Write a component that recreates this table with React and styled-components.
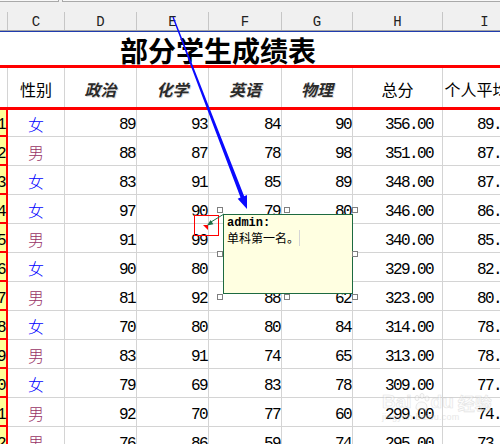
import React from 'react';
import styled, { createGlobalStyle } from 'styled-components';

const COLS = '8px 57px 72px 72px 73px 71px 90px 84px';
const GRID = '#d4d4d4';
const RED = '#ff0000';
const MONO = '"Liberation Mono", "DejaVu Sans Mono", monospace';
const CJK = '"Noto Sans CJK SC", "Noto Sans", sans-serif';

const GlobalStyle = createGlobalStyle`
  html, body { margin: 0; padding: 0; background: #fff; overflow: hidden; }
  body { font-family: ${MONO}; color: #000; }
`;

const Page = styled.div`
  position: relative;
  width: 500px;
  height: 444px;
  overflow: hidden;
  background: #fff;
`;

const Sheet = styled.div`
  width: 527px;
  display: flex;
  flex-direction: column;
`;

const TopBar = styled.div`
  height: 12px;
  background: #f0f0f0;
  display: flex;
  align-items: flex-start;
  gap: 3px;
`;

const BarBox = styled.div`
  height: 1px;
  background: #f8f8f8;
  border-bottom: 1px solid #a9a9a9;
  ${p => (p.$grow ? 'flex: 1; border-left: 1px solid #a9a9a9;' : 'width: 58px; border-right: 1px solid #a9a9a9;')}
`;

const ColHeaderRow = styled.div`
  display: grid;
  grid-template-columns: ${COLS};
  height: 18px;
  background: #f0f0f0;
  border-bottom: 1px solid #a3a3a3;
`;

const ColHead = styled.div`
  box-sizing: border-box;
  border-right: 1px solid #c6c6c6;
  display: flex;
  align-items: center;
  justify-content: center;
  padding-top: 1px;
  font-family: ${MONO};
  font-size: 14px;
  line-height: 1;
  color: #222;
`;

const BlueRule = styled.div`
  height: 1px;
  background: #1f3cae;
`;

const TitleRow = styled.div`
  height: 33px;
  border-bottom: 3px solid ${RED};
  display: flex;
  align-items: center;
  padding-left: 120px;
`;

const Title = styled.h1`
  margin: 0;
  font-family: ${CJK};
  font-weight: 700;
  font-size: 28px;
  line-height: 1;
  color: #000;
  padding-top: 2px;
`;

const HeaderRow = styled.div`
  display: grid;
  grid-template-columns: ${COLS};
  height: 39px;
  border-bottom: 3px solid ${RED};
`;

const HeadCell = styled.div`
  box-sizing: border-box;
  border-right: 1px solid ${GRID};
  display: flex;
  align-items: center;
  justify-content: center;
  padding-top: 2px;
  overflow: visible;
  white-space: nowrap;
  font-family: ${CJK};
  font-size: 16px;
  line-height: 1;
  color: #000;
  ${p => p.$em && `
    font-weight: 700;
    font-style: italic;
    color: #2b2b2b;
    text-shadow: 1px 1px 0 rgba(60, 40, 20, 0.18);
  `}
`;

const DataRow = styled.div`
  display: grid;
  grid-template-columns: ${COLS};
  height: ${p => (p.$first ? 27 : 29)}px;
`;

const Stub = styled.div`
  box-sizing: border-box;
  background: #ffff99;
  border-right: 2px solid ${RED};
  border-bottom: 2px solid ${RED};
  display: flex;
  align-items: flex-end;
  justify-content: flex-end;
  padding: 0 1px 2px 0;
  font-family: ${MONO};
  font-size: 16px;
  letter-spacing: -1.6px;
  line-height: 1;
  white-space: nowrap;
`;

const Cell = styled.div`
  box-sizing: border-box;
  border-right: 1px solid ${GRID};
  border-bottom: 1px solid ${GRID};
  display: flex;
  line-height: 1;
  white-space: nowrap;
`;

const NumCell = styled(Cell)`
  align-items: flex-end;
  justify-content: flex-end;
  padding: 0 ${p => p.$pr || 1}px 3px 0;
  font-family: ${MONO};
  font-size: 16px;
  letter-spacing: -1.6px;
  color: #000;
`;

const SexCell = styled(Cell)`
  align-items: center;
  justify-content: center;
  padding-top: 2px;
  font-family: ${CJK};
  font-weight: 300;
  font-size: 16px;
  color: ${p => (p.$male ? '#993366' : '#0000ff')};
`;

const Note = styled.div`
  position: absolute;
  left: 223px;
  top: 214px;
  width: 130px;
  height: 80px;
  box-sizing: border-box;
  background: #ffffe1;
  border: 1px solid #1d6a40;
  padding: 2px 3px;
  display: flex;
  flex-direction: column;
`;

const NoteAuthor = styled.div`
  font-family: ${MONO};
  font-weight: 700;
  font-size: 12px;
  line-height: 13px;
  color: #000;
`;

const NoteLine = styled.div`
  display: flex;
  align-items: center;
  font-family: ${CJK};
  font-size: 12px;
  line-height: 16px;
  color: #000;
`;

const Caret = styled.span`
  width: 1px;
  height: 16px;
  background: #d6d6d6;
`;

const Handle = styled.div`
  position: absolute;
  left: ${p => p.$x}px;
  top: ${p => p.$y}px;
  width: 4px;
  height: 4px;
  border: 1px solid #7f7f7f;
  background: #fff;
`;

const Marker = styled.div`
  position: absolute;
  left: 194px;
  top: 215px;
  width: 25px;
  height: 21px;
  box-sizing: border-box;
  border: 1px solid ${RED};
`;

const Overlay = styled.svg`
  position: absolute;
  left: 0;
  top: 0;
  pointer-events: none;
`;

const Watermark = styled.div`
  position: absolute;
  left: 382px;
  top: 392px;
  display: flex;
  flex-direction: column;
  gap: 2px;
  opacity: 0.4;
  pointer-events: none;
`;

const MarkTop = styled.div`
  display: flex;
  align-items: flex-end;
  gap: 1px;
  color: #fafafa;
  -webkit-text-stroke: 0.6px #b9b9b9;
  font-family: "Liberation Sans", Arial, sans-serif;
  font-weight: 700;
  font-size: 19px;
  line-height: 1;
`;

const MarkCjk = styled.span`
  font-family: ${CJK};
  font-size: 17px;
  margin-left: 3px;
`;

const MarkUrl = styled.div`
  font-family: "Liberation Sans", Arial, sans-serif;
  font-size: 9px;
  line-height: 1;
  color: #c4c4c4;
  letter-spacing: 0.3px;
`;

const rows = [
  ['1', '女', 89, 93, 84, 90, '356.00', '89.00'],
  ['2', '男', 88, 87, 78, 98, '351.00', '87.75'],
  ['3', '女', 83, 91, 85, 89, '348.00', '87.00'],
  ['4', '女', 97, 90, 79, 80, '346.00', '86.50'],
  ['5', '男', 91, 99, 72, 78, '340.00', '85.00'],
  ['6', '女', 90, 80, 79, 80, '329.00', '82.25'],
  ['7', '男', 81, 92, 88, 62, '323.00', '80.75'],
  ['8', '女', 70, 80, 80, 84, '314.00', '78.50'],
  ['9', '男', 83, 91, 74, 65, '313.00', '78.25'],
  ['10', '女', 79, 69, 83, 78, '309.00', '77.25'],
  ['11', '男', 92, 70, 77, 60, '299.00', '74.75'],
  ['12', '男', 76, 86, 59, 74, '295.00', '73.75'],
];

const handles = [
  [217, 207], [284, 207], [352, 207],
  [217, 251], [352, 251],
  [217, 294], [284, 294], [352, 294],
];

export default function App() {
  return (
    <>
      <GlobalStyle />
      <Page>
        <Sheet>
          <TopBar>
            <BarBox />
            <BarBox $grow />
          </TopBar>
          <ColHeaderRow>
            <ColHead />
            {['C', 'D', 'E', 'F', 'G', 'H', 'I'].map(c => (
              <ColHead key={c}>{c}</ColHead>
            ))}
          </ColHeaderRow>
          <BlueRule />
          <TitleRow>
            <Title>部分学生成绩表</Title>
          </TitleRow>
          <HeaderRow>
            <HeadCell />
            <HeadCell>性别</HeadCell>
            <HeadCell $em>政治</HeadCell>
            <HeadCell $em>化学</HeadCell>
            <HeadCell $em>英语</HeadCell>
            <HeadCell $em>物理</HeadCell>
            <HeadCell>总分</HeadCell>
            <HeadCell>个人平均分</HeadCell>
          </HeaderRow>
          {rows.map((r, i) => (
            <DataRow key={r[0]} $first={i === 0}>
              <Stub>{r[0]}</Stub>
              <SexCell $male={r[1] === '男'}>{r[1]}</SexCell>
              <NumCell>{r[2]}</NumCell>
              <NumCell>{r[3]}</NumCell>
              <NumCell>{r[4]}</NumCell>
              <NumCell>{r[5]}</NumCell>
              <NumCell $pr={9}>{r[6]}</NumCell>
              <NumCell $pr={9}>{r[7]}</NumCell>
            </DataRow>
          ))}
        </Sheet>

        <Watermark>
          <MarkTop>
            <span>Bai</span>
            <svg width="17" height="18" viewBox="0 0 17 18">
              <g fill="#f6f6f6" stroke="#b9b9b9" strokeWidth="0.8">
                <ellipse cx="4" cy="5" rx="2" ry="2.6" />
                <ellipse cx="9" cy="3" rx="2" ry="2.6" />
                <ellipse cx="14" cy="5.5" rx="2" ry="2.6" />
                <path d="M3 15 C3 10 6 9 8.5 9 C11 9 14 10 14 15 C14 17 11 17 8.5 16 C6 17 3 17 3 15 Z" />
              </g>
            </svg>
            <span>du</span>
            <MarkCjk>经验</MarkCjk>
          </MarkTop>
          <MarkUrl>jingyan.baidu.com</MarkUrl>
        </Watermark>

        <Marker />

        <Note>
          <NoteAuthor>admin:</NoteAuthor>
          <NoteLine>
            单科第一名。
            <Caret />
          </NoteLine>
        </Note>

        {handles.map(([x, y]) => (
          <Handle key={`${x}-${y}`} $x={x} $y={y} />
        ))}

        <Overlay width="500" height="444" viewBox="0 0 500 444">
          <polygon points="203,225 208,225 208,230" fill="#ff0000" />
          <line x1="211" y1="222" x2="224" y2="214" stroke="#1e6e46" strokeWidth="1" />
          <polygon points="207,225.5 213.4,224.3 210.6,220.1" fill="#1e6e46" />
          <polygon
            points="173.6,16.8 244.2,196.2 247,195.1 247,209 237.7,198.7 240.5,197.6 172.4,17.2"
            fill="#0a0aff"
          />
        </Overlay>
      </Page>
    </>
  );
}
